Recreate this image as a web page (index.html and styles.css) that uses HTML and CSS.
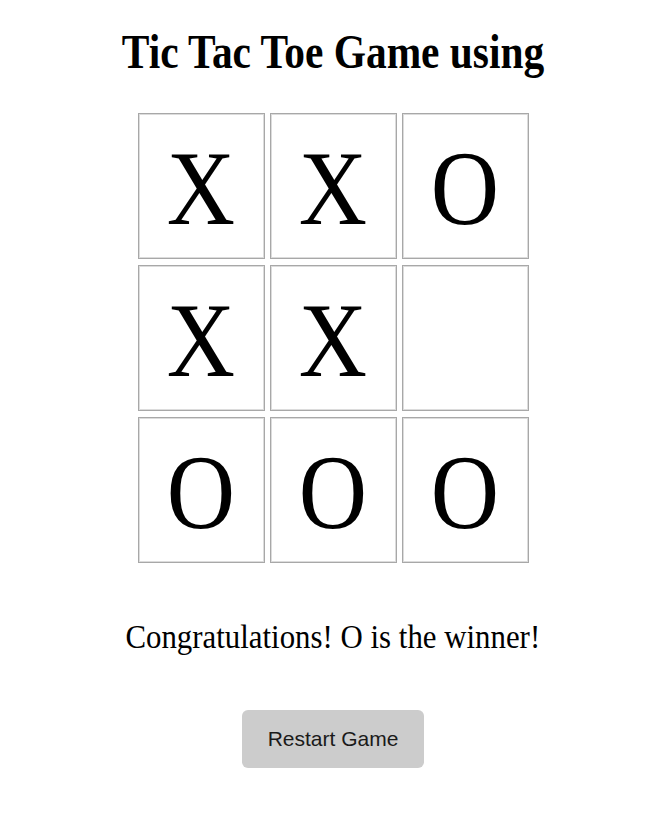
FILE: index.html
```html
<!DOCTYPE html>
<html lang="en">
<head>
<meta charset="utf-8">
<title>Tic Tac Toe</title>
<link rel="stylesheet" href="styles.css">
</head>
<body>
<div class="game">
  <h1 class="title"><span class="squeeze-title">Tic Tac Toe Game using</span></h1>
  <div class="board">
    <div class="cell"><span class="mark">X</span></div>
    <div class="cell"><span class="mark">X</span></div>
    <div class="cell"><span class="mark">O</span></div>
    <div class="cell"><span class="mark">X</span></div>
    <div class="cell"><span class="mark">X</span></div>
    <div class="cell"></div>
    <div class="cell"><span class="mark">O</span></div>
    <div class="cell"><span class="mark">O</span></div>
    <div class="cell"><span class="mark">O</span></div>
  </div>
  <p class="status"><span class="squeeze-status">Congratulations! O is the winner!</span></p>
  <div class="actions">
    <button class="restart" type="button">Restart Game</button>
  </div>
</div>
</body>
</html>
```

FILE: styles.css
```css
html, body {
  margin: 0;
  padding: 0;
  background: #ffffff;
}

.game {
  display: flex;
  flex-direction: column;
  align-items: center;
  font-family: "Liberation Serif", "Times New Roman", serif;
  color: #000;
}

.title {
  margin: 24px 0 0 0;
  font-size: 48px;
  line-height: 55px;
  font-weight: bold;
  text-align: center;
}

.squeeze-title {
  display: inline-block;
  transform: scaleX(0.862);
  white-space: nowrap;
}

.board {
  margin-top: 34px;
  display: grid;
  grid-template-columns: repeat(3, 127px);
  grid-template-rows: repeat(3, 146px);
  column-gap: 5px;
  row-gap: 6px;
}

.cell {
  box-sizing: border-box;
  border: 1px solid #a8a8a8;
  box-shadow: inset 0 0 0 1px #dcdcdc;
  display: flex;
  align-items: center;
  justify-content: center;
  background: #fff;
}

.mark {
  display: inline-block;
  font-size: 105px;
  line-height: 1;
  transform: scaleX(0.9);
  position: relative;
  top: 2px;
}

.status {
  margin: 55px 0 0 0;
  font-size: 33px;
  line-height: 38px;
  text-align: center;
}

.squeeze-status {
  display: inline-block;
  transform: scaleX(0.935);
  white-space: nowrap;
}

.actions {
  margin-top: 54px;
  display: flex;
  justify-content: center;
}

.restart {
  width: 182px;
  height: 58px;
  border: none;
  border-radius: 6px;
  background: #cccccc;
  color: #1a1a1a;
  font-family: "Liberation Sans", Arial, sans-serif;
  font-size: 21px;
  padding: 0;
  cursor: pointer;
}
```
